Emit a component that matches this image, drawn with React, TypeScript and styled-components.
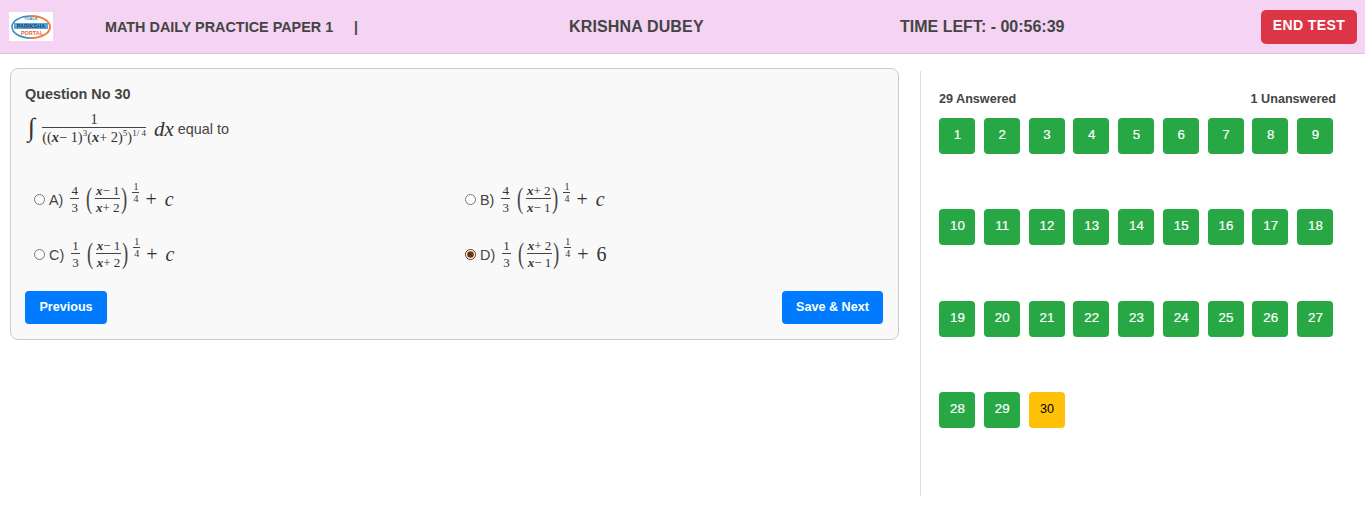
import * as React from "react";
import styled, { createGlobalStyle } from "styled-components";

const GlobalStyle = createGlobalStyle`
  html, body {
    margin: 0;
    padding: 0;
    background: #fff;
    font-family: "Liberation Sans", Arial, sans-serif;
    color: #444;
  }
`;

const Header = styled.header`
  height: 53px;
  box-sizing: content-box;
  background: #f4d3f3;
  border-bottom: 1px solid #d4c8d4;
  display: flex;
  align-items: center;
  padding: 0 8px 0 9px;
`;

const Logo = styled.svg`
  width: 44px;
  height: 29px;
  flex: none;
`;

const PaperTitle = styled.div`
  margin-left: 52px;
  width: 249px;
  font-size: 14.4px;
  font-weight: 700;
  white-space: nowrap;
`;

const Pipe = styled.div`
  font-size: 14px;
  font-weight: 700;
  width: 215px;
`;

const Student = styled.div`
  width: 331px;
  font-size: 16px;
  letter-spacing: 0.15px;
  font-weight: 700;
  white-space: nowrap;
`;

const Timer = styled.div`
  font-size: 16px;
  font-weight: 700;
  white-space: nowrap;
  flex: 1;
`;

const EndButton = styled.button`
  width: 96px;
  height: 34px;
  border: none;
  border-radius: 5px;
  background: #dc3545;
  color: #fff;
  font: 700 14px "Liberation Sans", Arial, sans-serif;
  letter-spacing: 0.4px;
  padding: 0 0 3px;
`;

const Main = styled.main`
  display: flex;
  align-items: flex-start;
  padding: 14px 0 0 10px;
`;

const QuestionCard = styled.section`
  width: 889px;
  height: 272px;
  box-sizing: border-box;
  background: #f9f9f9;
  border: 1px solid #ccc;
  border-radius: 8px;
  padding: 17px 14px 0;
  display: flex;
  flex-direction: column;
`;

const QuestionNo = styled.div`
  font-size: 14.4px;
  font-weight: 700;
  line-height: 16px;
`;

const QuestionText = styled.div`
  display: flex;
  align-items: center;
  height: 42px;
  margin-top: 6px;
  font-size: 14.4px;
  white-space: nowrap;
`;

const Options = styled.div`
  display: grid;
  grid-template-columns: 431px 1fr;
  grid-auto-rows: 55px;
  margin: 22px 0 0 9px;
  align-items: center;
`;

const Option = styled.label`
  display: flex;
  align-items: center;
  height: 40px;
  font-size: 14.4px;
  white-space: nowrap;
`;

const Radio = styled.input`
  width: 11px;
  height: 11px;
  margin: 0 4px 0 0;
  accent-color: #6b3410;
`;

const MathBlock = styled.span<{ $inset?: number }>`
  display: inline-flex;
  align-items: center;
  font-family: "Liberation Serif", "Times New Roman", serif;
  color: #333;
  margin-left: ${(p) => p.$inset ?? 7}px;
`;

const Frac = styled.span<{ $size: number }>`
  display: inline-flex;
  flex-direction: column;
  align-items: center;
  font-size: ${(p) => p.$size}px;
`;

const FracTop = styled.span<{ $pad?: number; $lh: number }>`
  border-bottom: 1px solid #444;
  padding: 0 ${(p) => p.$pad ?? 1}px;
  line-height: ${(p) => p.$lh}px;
  align-self: stretch;
  text-align: center;
`;

const FracBottom = styled.span<{ $lh: number }>`
  line-height: ${(p) => p.$lh}px;
`;

const Paren = styled.span<{ $side: "left" | "right" }>`
  font-size: 30px;
  font-weight: 400;
  line-height: 30px;
  transform: scaleX(0.62);
  margin: -3px ${(p) => (p.$side === "left" ? 1 : -2)}px 0 ${(p) => (p.$side === "left" ? 5 : -1)}px;
  color: #444;
`;

const Power = styled.span`
  display: flex;
  align-self: flex-start;
  margin: -1px 0 0 5px;
`;

const Var = styled.i`
  font-weight: 700;
`;

const Plus = styled.span`
  font-size: 20px;
  margin: 0 8px 0 6px;
`;

const Const = styled.i`
  font-size: 20px;
`;

const Sup = styled.sup`
  font-size: 9px;
  line-height: 0;
`;

const Integral = styled.span`
  font-family: "Liberation Serif", serif;
  font-style: italic;
  font-size: 26px;
  color: #333;
  margin: -3px 7px 0 3px;
`;

const Dx = styled.i`
  font-family: "Liberation Serif", serif;
  font-size: 21px;
  color: #333;
  margin: 0 4px 0 8px;
`;

const CardFooter = styled.div`
  display: flex;
  justify-content: space-between;
  margin-top: 9px;
  margin-right: 1px;
`;

const NavButton = styled.button<{ $width: number }>`
  width: ${(p) => p.$width}px;
  height: 33px;
  padding: 0 0 2px;
  border: none;
  border-radius: 4px;
  background: #007bff;
  color: #fff;
  font: 700 12.6px "Liberation Sans", Arial, sans-serif;
`;

const Sidebar = styled.aside`
  width: 397px;
  height: 425px;
  margin: 3px 0 0 21px;
  padding: 0 0 0 18px;
  border-left: 1px solid #ddd;
`;

const Counts = styled.div`
  display: flex;
  justify-content: space-between;
  margin-top: 21px;
  font-size: 12.6px;
  font-weight: 700;
  line-height: 15px;
`;

const Palette = styled.div`
  display: grid;
  grid-template-columns: repeat(9, 36px);
  column-gap: 8.75px;
  row-gap: 55.4px;
  margin-top: 11px;
`;

const Tile = styled.button<{ $current?: boolean }>`
  width: 36px;
  height: 36px;
  padding: 0 0 3px 1px;
  border: none;
  border-radius: 4px;
  background: ${(p) => (p.$current ? "#ffc107" : "#28a745")};
  color: ${(p) => (p.$current ? "#000" : "#fff")};
  font: 400 ${(p) => (p.$current ? 12.6 : 13.3)}px "Liberation Sans", Arial, sans-serif;
  -webkit-text-stroke: ${(p) => (p.$current ? 0 : 0.2)}px currentColor;
`;

function Fraction({ top, bottom }: { top: React.ReactNode; bottom: React.ReactNode }) {
  return (
    <Frac $size={13}>
      <FracTop $lh={15}>{top}</FracTop>
      <FracBottom $lh={18}>{bottom}</FracBottom>
    </Frac>
  );
}

function Answer(props: {
  coef: string;
  top: React.ReactNode;
  bottom: React.ReactNode;
  last: React.ReactNode;
}) {
  return (
    <MathBlock>
      <Fraction top={props.coef} bottom="3" />
      <Paren $side="left">(</Paren>
      <Fraction top={props.top} bottom={props.bottom} />
      <Paren $side="right">)</Paren>
      <Power>
        <Frac $size={10}>
          <FracTop $lh={10}>1</FracTop>
          <FracBottom $lh={11}>4</FracBottom>
        </Frac>
      </Power>
      <Plus>+</Plus>
      {props.last}
    </MathBlock>
  );
}

const minusOne = (
  <>
    <Var>x</Var>− 1
  </>
);
const plusTwo = (
  <>
    <Var>x</Var>+ 2
  </>
);

export default function App() {
  return (
    <>
      <GlobalStyle />
      <Header>
        <Logo viewBox="0 0 44 29" role="img" aria-label="Logo">
          <rect width="44" height="29" fill="#fff" />
          <path d="M22 4 C11 4 3 9 3 15 C3 21 11 26 22 26" fill="none" stroke="#3b8cc8" strokeWidth="1.6" />
          <path d="M22 4 C33 4 41 9 41 15 C41 21 33 26 22 26" fill="none" stroke="#ee7a3c" strokeWidth="1.8" />
          <text x="22" y="8" fontSize="4" fontWeight="700" textAnchor="middle" fill="#4a7fb0" fontFamily="Liberation Sans">
            TOALK
          </text>
          <rect x="5" y="11" width="34" height="6" fill="#5aa6d8" />
          <text x="22" y="16" fontSize="5.5" fontWeight="700" textAnchor="middle" fill="#1d3f70" fontFamily="Liberation Sans">
            PARIKSHA
          </text>
          <text x="23" y="23" fontSize="5.5" fontWeight="700" textAnchor="middle" fill="#e8662c" fontFamily="Liberation Sans">
            PORTAL
          </text>
        </Logo>
        <PaperTitle>MATH DAILY PRACTICE PAPER 1</PaperTitle>
        <Pipe>|</Pipe>
        <Student>KRISHNA DUBEY</Student>
        <Timer>TIME LEFT: - 00:56:39</Timer>
        <EndButton>END TEST</EndButton>
      </Header>
      <Main>
        <QuestionCard>
          <QuestionNo>Question No 30</QuestionNo>
          <QuestionText>
            <Integral>∫</Integral>
            <MathBlock $inset={0}>
              <Frac $size={14.4}>
                <FracTop $lh={15}>1</FracTop>
                <FracBottom $lh={19}>
                  ((<Var>x</Var>− 1)<Sup>3</Sup>(<Var>x</Var>+ 2)<Sup>5</Sup>)<Sup>1/ 4</Sup>
                </FracBottom>
              </Frac>
            </MathBlock>
            <Dx>dx</Dx>
            equal to
          </QuestionText>
          <Options>
            <Option>
              <Radio type="radio" name="answer" />
              A)
              <Answer coef="4" top={minusOne} bottom={plusTwo} last={<Const>c</Const>} />
            </Option>
            <Option>
              <Radio type="radio" name="answer" />
              B)
              <Answer coef="4" top={plusTwo} bottom={minusOne} last={<Const>c</Const>} />
            </Option>
            <Option>
              <Radio type="radio" name="answer" />
              C)
              <Answer coef="1" top={minusOne} bottom={plusTwo} last={<Const>c</Const>} />
            </Option>
            <Option>
              <Radio type="radio" name="answer" defaultChecked />
              D)
              <Answer coef="1" top={plusTwo} bottom={minusOne} last={<Const as="span">6</Const>} />
            </Option>
          </Options>
          <CardFooter>
            <NavButton $width={82}>Previous</NavButton>
            <NavButton $width={101}>Save &amp; Next</NavButton>
          </CardFooter>
        </QuestionCard>
        <Sidebar>
          <Counts>
            <span>29 Answered</span>
            <span>1 Unanswered</span>
          </Counts>
          <Palette>
            {Array.from({ length: 30 }, (_, i) => (
              <Tile key={i} $current={i === 29}>
                {i + 1}
              </Tile>
            ))}
          </Palette>
        </Sidebar>
      </Main>
    </>
  );
}
